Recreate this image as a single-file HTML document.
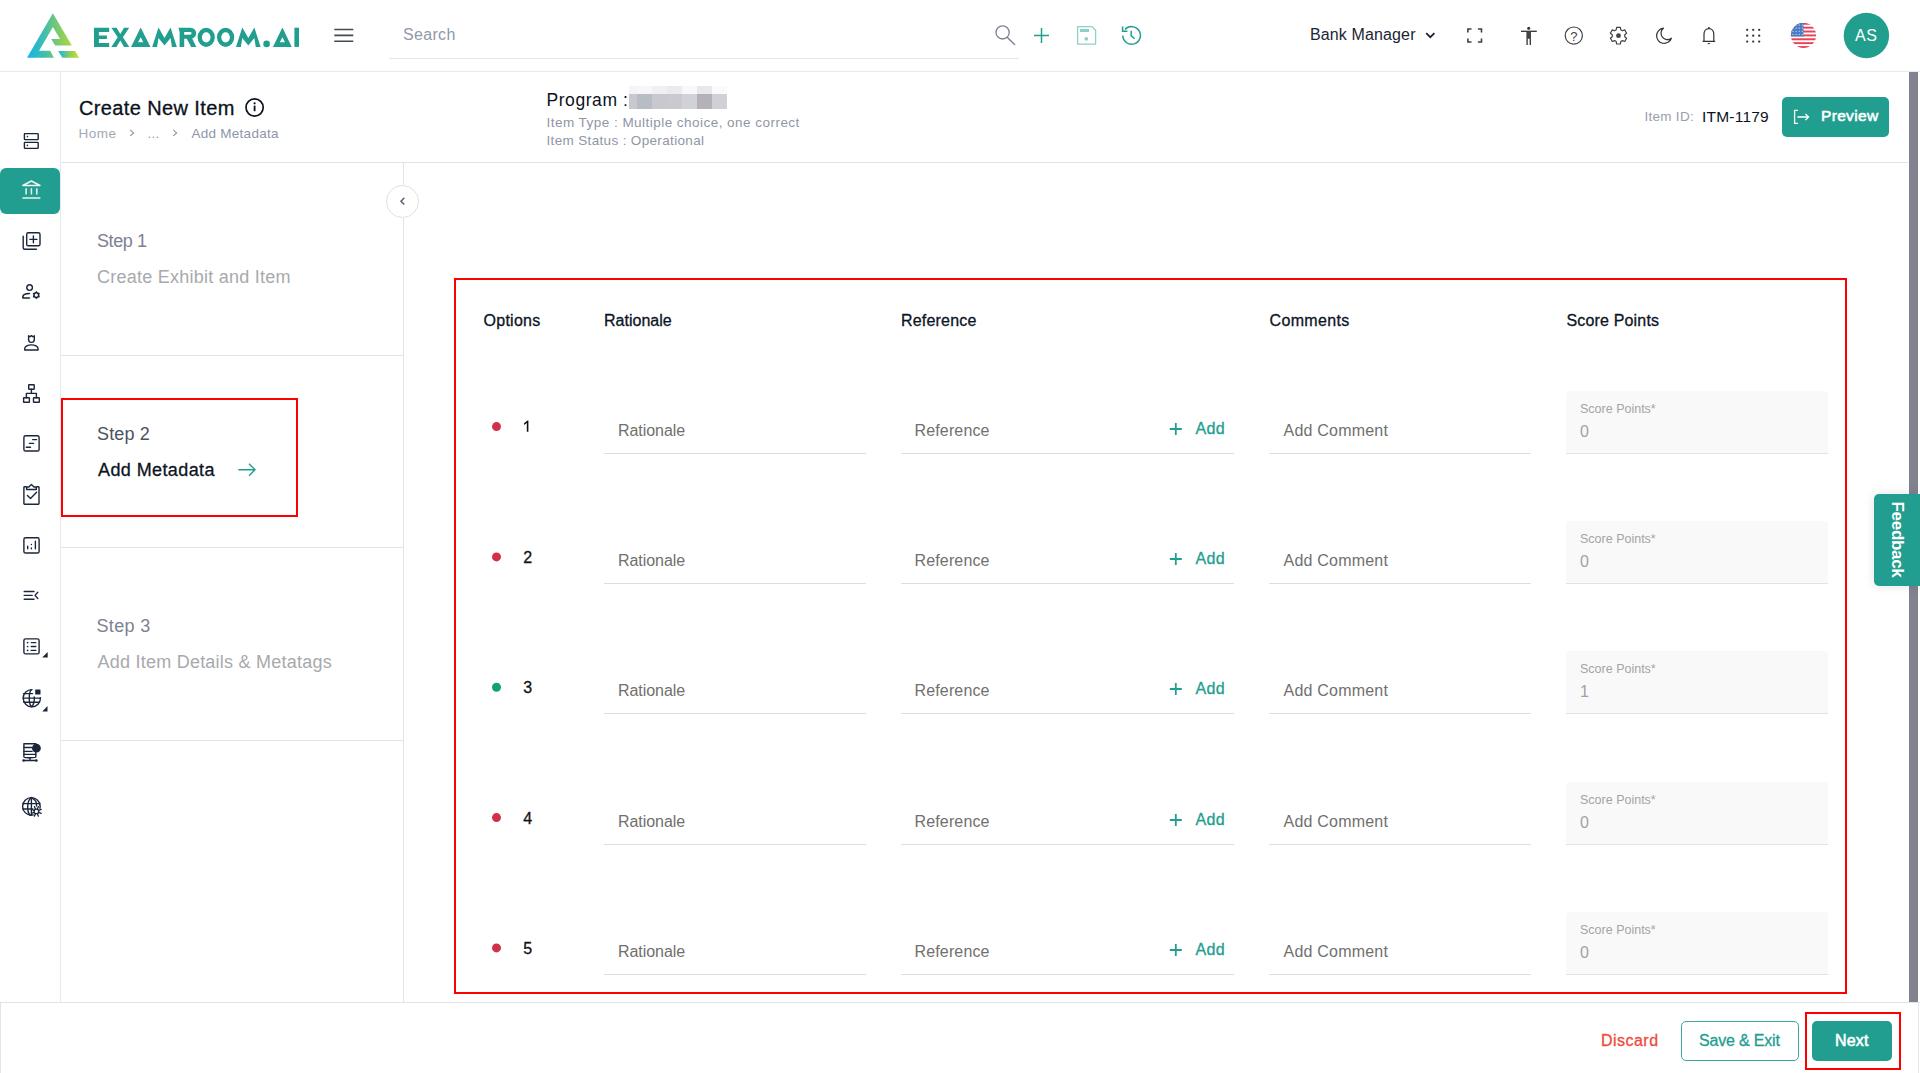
<!DOCTYPE html>
<html><head><meta charset="utf-8"><title>Create New Item</title><style>
*{box-sizing:border-box}
html,body{margin:0;padding:0}
body{width:1920px;height:1073px;overflow:hidden;background:#fff;font-family:"Liberation Sans",sans-serif;position:relative}
.t{position:absolute;white-space:nowrap}
.b{position:absolute}
svg.ov{position:absolute;left:0;top:0;width:1920px;height:1073px;overflow:visible}
</style></head><body>
<div class="b" style="left:0;top:71px;width:1920px;height:1px;background:#e8eaef"></div>
<div class="b" style="left:60px;top:72px;width:1px;height:930px;background:#e6e9f0"></div>
<div class="b" style="left:61px;top:162px;width:1847px;height:1px;background:#dfe3ea"></div>
<div class="b" style="left:403px;top:163px;width:1px;height:839px;background:#dfe3ea"></div>
<div class="b" style="left:61px;top:355px;width:342px;height:1px;background:#dfe3ea"></div>
<div class="b" style="left:61px;top:547px;width:342px;height:1px;background:#dfe3ea"></div>
<div class="b" style="left:61px;top:740px;width:342px;height:1px;background:#dfe3ea"></div>
<div class="b" style="left:0;top:1002px;width:1920px;height:1px;background:#dfe3ea"></div>
<div class="b" style="left:1918px;top:1002px;width:1px;height:71px;background:#e6e9f0"></div>
<div class="b" style="left:0;top:1002px;width:1px;height:71px;background:#dfe3ea"></div>
<div class="b" style="left:1909px;top:72px;width:9px;height:930px;background:#80828f"></div>
<div class="b" style="left:389px;top:58px;width:630px;height:1px;background:#e4e6ea"></div>
<div class="b" style="left:0;top:168px;width:60px;height:46px;background:#219e8f;border-radius:6px"></div>
<div class="b" style="left:1782px;top:97px;width:107px;height:40px;background:#219e8f;border-radius:5px"></div>
<div class="b" style="left:629px;top:86px;width:8px;height:8px;background:#f4f4f6"></div>
<div class="b" style="left:629px;top:94px;width:8px;height:15px;background:#c8c8ce"></div>
<div class="b" style="left:637px;top:86px;width:15px;height:8px;background:#f6f6f8"></div>
<div class="b" style="left:637px;top:94px;width:15px;height:15px;background:#b8bcc4"></div>
<div class="b" style="left:652px;top:86px;width:15px;height:8px;background:#f0f0f2"></div>
<div class="b" style="left:652px;top:94px;width:15px;height:15px;background:#c8c8ce"></div>
<div class="b" style="left:667px;top:86px;width:15px;height:8px;background:#ebebed"></div>
<div class="b" style="left:667px;top:94px;width:15px;height:15px;background:#cacace"></div>
<div class="b" style="left:682px;top:86px;width:15px;height:8px;background:#f8f8fa"></div>
<div class="b" style="left:682px;top:94px;width:15px;height:15px;background:#d0d2d8"></div>
<div class="b" style="left:697px;top:86px;width:15px;height:8px;background:#e8e8ea"></div>
<div class="b" style="left:697px;top:94px;width:15px;height:15px;background:#b4b2b8"></div>
<div class="b" style="left:712px;top:86px;width:15px;height:8px;background:#fafafa"></div>
<div class="b" style="left:712px;top:94px;width:15px;height:15px;background:#d0d0d6"></div>
<div class="b" style="left:386px;top:185px;width:33px;height:33px;border:1px solid #dde1e8;border-radius:50%;background:#fff"></div>
<div class="b" style="left:61px;top:398px;width:237px;height:119px;border:2px solid #ff0000"></div>
<div class="b" style="left:454px;top:278px;width:1393px;height:716px;border:2px solid #ff0000"></div>
<div class="b" style="left:1805px;top:1012px;width:96px;height:58px;border:2px solid #ff0000"></div>
<div class="b" style="left:1681px;top:1021px;width:118px;height:40px;border:1.5px solid #3aa99b;border-radius:5px"></div>
<div class="b" style="left:1812px;top:1021px;width:80px;height:40px;background:#219e8f;border-radius:5px"></div>
<div class="b" style="left:604px;top:453.00px;width:262px;height:1px;background:#dedede"></div>
<div class="b" style="left:901px;top:453.00px;width:333px;height:1px;background:#dedede"></div>
<div class="b" style="left:1269px;top:453.00px;width:262px;height:1px;background:#dedede"></div>
<div class="b" style="left:1566px;top:391.00px;width:262px;height:63px;background:#f9f9f9;border-radius:4px 4px 0 0;border-bottom:1px solid #e2e2e2"></div>
<div class="b" style="left:604px;top:583.00px;width:262px;height:1px;background:#dedede"></div>
<div class="b" style="left:901px;top:583.00px;width:333px;height:1px;background:#dedede"></div>
<div class="b" style="left:1269px;top:583.00px;width:262px;height:1px;background:#dedede"></div>
<div class="b" style="left:1566px;top:521.00px;width:262px;height:63px;background:#f9f9f9;border-radius:4px 4px 0 0;border-bottom:1px solid #e2e2e2"></div>
<div class="b" style="left:604px;top:713.00px;width:262px;height:1px;background:#dedede"></div>
<div class="b" style="left:901px;top:713.00px;width:333px;height:1px;background:#dedede"></div>
<div class="b" style="left:1269px;top:713.00px;width:262px;height:1px;background:#dedede"></div>
<div class="b" style="left:1566px;top:651.00px;width:262px;height:63px;background:#f9f9f9;border-radius:4px 4px 0 0;border-bottom:1px solid #e2e2e2"></div>
<div class="b" style="left:604px;top:844.00px;width:262px;height:1px;background:#dedede"></div>
<div class="b" style="left:901px;top:844.00px;width:333px;height:1px;background:#dedede"></div>
<div class="b" style="left:1269px;top:844.00px;width:262px;height:1px;background:#dedede"></div>
<div class="b" style="left:1566px;top:782.00px;width:262px;height:63px;background:#f9f9f9;border-radius:4px 4px 0 0;border-bottom:1px solid #e2e2e2"></div>
<div class="b" style="left:604px;top:974.00px;width:262px;height:1px;background:#dedede"></div>
<div class="b" style="left:901px;top:974.00px;width:333px;height:1px;background:#dedede"></div>
<div class="b" style="left:1269px;top:974.00px;width:262px;height:1px;background:#dedede"></div>
<div class="b" style="left:1566px;top:912.00px;width:262px;height:63px;background:#f9f9f9;border-radius:4px 4px 0 0;border-bottom:1px solid #e2e2e2"></div>
<div class="b" style="left:1874px;top:494px;width:46px;height:92px;background:#219e8f;border-radius:5px 0 0 5px;box-shadow:0 0 10px rgba(0,0,0,0.12)"></div>
<div class="t" id="feedback" style="font-size:17px;line-height:17px;font-weight:bold;color:#fff;transform-origin:center;transform:rotate(90deg);text-align:center;width:90px;left:1851.5px;top:530.8px;letter-spacing:-0.3px">Feedback</div>
<svg class="ov" width="1920" height="1073" viewBox="0 0 1920 1073">
<path d="M334.3 29.5 H353.3 M334.3 35.4 H353.3 M334.3 41.2 H353.3" stroke="#454a52" stroke-width="1.6" fill="none"/>
<circle cx="1002.6" cy="32.4" r="6.6" fill="none" stroke="#7e8290" stroke-width="1.3"/>
<path d="M1007.4 37.4 L1014.6 44.6" stroke="#7e8290" stroke-width="1.4" stroke-linecap="round"/>
<path d="M1041.5 28 V43 M1034 35.4 H1049" stroke="#219e8f" stroke-width="1.5"/>
<path d="M1077.6 26.6 H1092 L1095.6 30.2 V44.2 H1077.6 Z" fill="none" stroke="#8fd0c8" stroke-width="1.3" stroke-linejoin="round"/>
<rect x="1080" y="29" width="9" height="3" fill="#8fd0c8"/>
<circle cx="1086.3" cy="38.8" r="1.9" fill="#8fd0c8"/>
<path d="M1122.8 35.5 A8.8 8.8 0 1 0 1125 29.6" fill="none" stroke="#219e8f" stroke-width="1.5"/>
<path d="M1122.6 26.4 V31.2 H1127.4" fill="none" stroke="#219e8f" stroke-width="1.5"/>
<path d="M1131.2 30.8 V35.8 L1134.6 38.8" fill="none" stroke="#219e8f" stroke-width="1.5"/>
<path d="M1426.2 33.2 L1430.3 37.2 L1434.4 33.2" fill="none" stroke="#1c2434" stroke-width="1.8"/>
<path d="M1467.9 32.6 V29 H1471.5 M1477.9 29 H1481.5 V32.6 M1481.5 38.4 V42 H1477.9 M1471.5 42 H1467.9 V38.4" fill="none" stroke="#3b4150" stroke-width="1.6"/>
<circle cx="1528.7" cy="28.2" r="1.5" fill="#333"/>
<path d="M1521 31.3 H1536.8" stroke="#333" stroke-width="1.3"/>
<rect x="1526.4" y="31.3" width="4.6" height="7.5" fill="#444"/>
<path d="M1527.1 38.5 V45 M1530.3 38.5 V45" stroke="#333" stroke-width="1.3"/>
<circle cx="1573.8" cy="35.6" r="8.6" fill="none" stroke="#444" stroke-width="1.2"/>
<text x="1573.8" y="40.6" font-family="Liberation Sans" font-size="13" fill="#444" text-anchor="middle">?</text>
<path d="M1620.76 29.82 L1620.41 27.42 L1616.59 27.42 L1616.24 29.82 L1614.54 30.80 L1612.28 29.90 L1610.37 33.21 L1612.28 34.71 L1612.28 36.69 L1610.37 38.19 L1612.28 41.50 L1614.54 40.60 L1616.24 41.58 L1616.59 43.98 L1620.41 43.98 L1620.76 41.58 L1622.46 40.60 L1624.72 41.50 L1626.63 38.19 L1624.72 36.69 L1624.72 34.71 L1626.63 33.21 L1624.72 29.90 L1622.46 30.80 Z" fill="none" stroke="#444" stroke-width="1.2" stroke-linejoin="round"/>
<circle cx="1618.5" cy="35.7" r="2.4" fill="#444"/>
<path d="M1663.4 28.2 A7.6 7.6 0 1 0 1671.4 38.2 A6.2 6.2 0 0 1 1663.4 28.2 Z" fill="none" stroke="#333" stroke-width="1.2" stroke-linejoin="round"/>
<path d="M1702.6 41.4 H1715.2 M1704 41.4 V34.4 C1704 31 1706 28.6 1708.9 28.6 C1711.8 28.6 1713.8 31 1713.8 34.4 V41.4" fill="none" stroke="#333" stroke-width="1.2"/>
<circle cx="1708.9" cy="27.8" r="0.9" fill="#333"/>
<path d="M1707.4 43 H1710.4 L1708.9 44.6 Z" fill="#333"/>
<circle cx="1747.2" cy="29.8" r="1.15" fill="#333"/>
<circle cx="1747.2" cy="35.7" r="1.15" fill="#333"/>
<circle cx="1747.2" cy="41.6" r="1.15" fill="#333"/>
<circle cx="1753.2" cy="29.8" r="1.15" fill="#333"/>
<circle cx="1753.2" cy="35.7" r="1.15" fill="#333"/>
<circle cx="1753.2" cy="41.6" r="1.15" fill="#333"/>
<circle cx="1759.2" cy="29.8" r="1.15" fill="#333"/>
<circle cx="1759.2" cy="35.7" r="1.15" fill="#333"/>
<circle cx="1759.2" cy="41.6" r="1.15" fill="#333"/>
<defs><clipPath id="fc"><circle cx="1803.5" cy="35.4" r="12.6"/></clipPath></defs>
<g clip-path="url(#fc)"><rect x="1790" y="22" width="28" height="28" fill="#fff"/><rect x="1790" y="22.80" width="28" height="1.94" fill="#e8425a"/><rect x="1790" y="26.68" width="28" height="1.94" fill="#e8425a"/><rect x="1790" y="30.55" width="28" height="1.94" fill="#e8425a"/><rect x="1790" y="34.43" width="28" height="1.94" fill="#e8425a"/><rect x="1790" y="38.31" width="28" height="1.94" fill="#e8425a"/><rect x="1790" y="42.18" width="28" height="1.94" fill="#e8425a"/><rect x="1790" y="46.06" width="28" height="1.94" fill="#e8425a"/><rect x="1790" y="22.8" width="13.5" height="13.57" fill="#4a7cc4"/><circle cx="1793.0" cy="25.0" r="0.55" fill="#fff"/><circle cx="1793.0" cy="28.1" r="0.55" fill="#fff"/><circle cx="1793.0" cy="31.2" r="0.55" fill="#fff"/><circle cx="1793.0" cy="34.3" r="0.55" fill="#fff"/><circle cx="1796.1" cy="25.0" r="0.55" fill="#fff"/><circle cx="1796.1" cy="28.1" r="0.55" fill="#fff"/><circle cx="1796.1" cy="31.2" r="0.55" fill="#fff"/><circle cx="1796.1" cy="34.3" r="0.55" fill="#fff"/><circle cx="1799.2" cy="25.0" r="0.55" fill="#fff"/><circle cx="1799.2" cy="28.1" r="0.55" fill="#fff"/><circle cx="1799.2" cy="31.2" r="0.55" fill="#fff"/><circle cx="1799.2" cy="34.3" r="0.55" fill="#fff"/><circle cx="1802.3" cy="25.0" r="0.55" fill="#fff"/><circle cx="1802.3" cy="28.1" r="0.55" fill="#fff"/><circle cx="1802.3" cy="31.2" r="0.55" fill="#fff"/><circle cx="1802.3" cy="34.3" r="0.55" fill="#fff"/></g>
<circle cx="1866.4" cy="35.5" r="22.7" fill="#229e8f"/>
<rect x="24.4" y="133.6" width="13.8" height="6" rx="0.6" fill="none" stroke="#1b263b" stroke-width="1.4" stroke-linecap="round" stroke-linejoin="round"/>
<rect x="24.4" y="142.4" width="13.8" height="6" rx="0.6" fill="none" stroke="#1b263b" stroke-width="1.4" stroke-linecap="round" stroke-linejoin="round"/>
<circle cx="27.4" cy="136.6" r="0.8" fill="#1b263b"/><circle cx="27.4" cy="145.4" r="0.8" fill="#1b263b"/>
<path d="M22.8 185.5 L31.4 181 L40 185.5 Z" fill="none" stroke="#eef6f4" stroke-width="1.5" stroke-linejoin="round" stroke-linecap="butt"/>
<path d="M26.1 188.3 V194.6 M31.4 188.3 V194.6 M36.8 188.3 V194.6" fill="none" stroke="#eef6f4" stroke-width="1.5" stroke-linejoin="round" stroke-linecap="butt"/>
<path d="M22.4 198 H40.4" fill="none" stroke="#d5e8e4" stroke-width="1.7"/>
<rect x="26.7" y="232.8" width="13.3" height="13" rx="1.6" fill="none" stroke="#1b263b" stroke-width="1.4" stroke-linecap="round" stroke-linejoin="round"/>
<path d="M23.2 236.2 V247.5 Q23.2 249.3 25 249.3 H36.4" fill="none" stroke="#1b263b" stroke-width="1.4" stroke-linecap="round" stroke-linejoin="round"/>
<path d="M33.4 235.9 V242.8 M29.9 239.4 H36.9" fill="none" stroke="#1b263b" stroke-width="1.4" stroke-linecap="round" stroke-linejoin="round"/>
<circle cx="29.6" cy="287.6" r="2.8" fill="none" stroke="#1b263b" stroke-width="1.4" stroke-linecap="round" stroke-linejoin="round"/>
<path d="M29.4 293.5 C26 293.6 23.2 294.6 22.9 296.4 V298 H29.4" fill="none" stroke="#1b263b" stroke-width="1.6" stroke-linecap="round" stroke-linejoin="round"/>
<path fill="#1b263b" fill-rule="evenodd" d="M36.30 291.00 L34.80 292.50 L32.75 293.05 L33.30 295.10 L32.75 297.15 L34.80 297.70 L36.30 299.20 L37.80 297.70 L39.85 297.15 L39.30 295.10 L39.85 293.05 L37.80 292.50 Z M34.699999999999996 295.1 A1.6 1.6 0 1 0 37.9 295.1 A1.6 1.6 0 1 0 34.699999999999996 295.1 Z"/>
<path d="M28.6 335.8 L29.9 336.8 L31.4 335.6 L32.9 336.8 L34.3 335.8 V339.5 C34.3 341.2 33 342.4 31.4 342.4 C29.8 342.4 28.6 341.2 28.6 339.5 Z" fill="none" stroke="#1b263b" stroke-width="1.4" stroke-linecap="round" stroke-linejoin="round"/>
<path d="M24.7 350 V348.8 C24.7 346.4 28 344.9 31.4 344.9 C34.8 344.9 38.1 346.4 38.1 348.8 V350 Z" fill="none" stroke="#1b263b" stroke-width="1.4" stroke-linecap="round" stroke-linejoin="round"/>
<rect x="28.7" y="384.7" width="5.5" height="4.6" rx="0.4" fill="none" stroke="#1b263b" stroke-width="1.4" stroke-linecap="round" stroke-linejoin="round"/>
<rect x="23.6" y="397.8" width="5.8" height="4.5" rx="0.4" fill="none" stroke="#1b263b" stroke-width="1.4" stroke-linecap="round" stroke-linejoin="round"/>
<rect x="33.5" y="397.8" width="5.8" height="4.5" rx="0.4" fill="none" stroke="#1b263b" stroke-width="1.4" stroke-linecap="round" stroke-linejoin="round"/>
<path d="M31.4 389.3 V393.4 M26.4 397.8 V393.4 H36.4 V397.8" fill="none" stroke="#1b263b" stroke-width="1.4" stroke-linecap="round" stroke-linejoin="round"/>
<rect x="23.9" y="435.8" width="15.2" height="15.2" rx="1.6" fill="none" stroke="#1b263b" stroke-width="1.4" stroke-linecap="round" stroke-linejoin="round"/>
<path d="M32.6 439.6 H36.6 M29.4 443.4 H33.5 M26.3 447.3 H30.5" fill="none" stroke="#1b263b" stroke-width="1.4" stroke-linecap="round" stroke-linejoin="round"/>
<path d="M26 486.8 H24.6 Q23.9 486.8 23.9 487.5 V503.5 Q23.9 504.2 24.6 504.2 H38.3 Q39 504.2 39 503.5 V487.5 Q39 486.8 38.3 486.8 H37" fill="none" stroke="#1b263b" stroke-width="1.4" stroke-linecap="round" stroke-linejoin="round"/>
<path d="M26.6 489.5 V487 H28.8 L31.4 484.5 L34 487 H36.3 V489.5 Z" fill="none" stroke="#1b263b" stroke-width="1.4" stroke-linecap="round" stroke-linejoin="round"/>
<path d="M27.4 495.4 L30.5 498.4 L36.6 492.3" fill="none" stroke="#1b263b" stroke-width="1.4" stroke-linecap="round" stroke-linejoin="round"/>
<rect x="23.9" y="537.8" width="15.2" height="15.2" rx="1.6" fill="none" stroke="#1b263b" stroke-width="1.4" stroke-linecap="round" stroke-linejoin="round"/>
<path d="M27.7 546.1 V548.8 M31.4 547.9 V548.8 M35.4 541.2 V548.8" fill="none" stroke="#1b263b" stroke-width="1.4" stroke-linecap="round" stroke-linejoin="round"/>
<circle cx="31.4" cy="544.6" r="0.75" fill="#1b263b"/>
<path d="M24.2 591.5 H34 M24.2 595.4 H32.2 M24.2 599.3 H34 M37.8 592.3 L35 595.4 L37.8 598.5" fill="none" stroke="#1b263b" stroke-width="1.4" stroke-linecap="round" stroke-linejoin="round"/>
<rect x="23.9" y="638.9" width="15.2" height="15" rx="1.6" fill="none" stroke="#1b263b" stroke-width="1.4" stroke-linecap="round" stroke-linejoin="round"/>
<path d="M31.2 642.6 H35.8 M31.2 646.5 H35.8 M31.2 650.4 H35.8" fill="none" stroke="#1b263b" stroke-width="1.4" stroke-linecap="round" stroke-linejoin="round"/>
<circle cx="27.6" cy="642.6" r="0.85" fill="#1b263b"/>
<circle cx="27.6" cy="646.5" r="0.85" fill="#1b263b"/>
<circle cx="27.6" cy="650.4" r="0.85" fill="#1b263b"/>
<path d="M42.2 657.5 L47.7 652.1 V657.5 Z" fill="#1b263b"/>
<path d="M32 689.6 A8.6 8.6 0 1 0 40.4 697.6" fill="none" stroke="#1b263b" stroke-width="1.4" stroke-linecap="round" stroke-linejoin="round"/>
<path d="M23.5 693.6 H32.5 M23 698.1 H40.2 M23.8 702.2 H39.6 M31.5 689.7 C28.5 692 28.5 704 31.5 706.8 C34 704.5 34.5 700 34.2 697" fill="none" stroke="#1b263b" stroke-width="1.4" stroke-linecap="round" stroke-linejoin="round"/>
<rect x="35.2" y="689.5" width="5.3" height="5.1" rx="0.6" fill="#1b263b"/>
<path d="M42.3 711.5 L47.5 706.1 V711.5 Z" fill="#1b263b"/>
<path d="M23.9 743.8 H35.8 V757 C35.8 758 23.9 758 23.9 757 Z" fill="none" stroke="#1b263b" stroke-width="1.4" stroke-linecap="round" stroke-linejoin="round"/>
<path d="M23.9 747.5 H32 M23.9 751.4 H32 M23.9 754.4 H35.8" fill="none" stroke="#1b263b" stroke-width="1.4" stroke-linecap="round" stroke-linejoin="round"/>
<circle cx="36.4" cy="748.2" r="4.4" fill="#1b263b"/>
<path d="M23.6 760.5 H36.5 M30 758 V760.5" fill="none" stroke="#1b263b" stroke-width="1.4" stroke-linecap="round" stroke-linejoin="round"/>
<circle cx="23.6" cy="760.5" r="1.3" fill="#1b263b"/><circle cx="36.4" cy="760.5" r="1.3" fill="#1b263b"/>
<circle cx="31.4" cy="806.4" r="8.8" fill="none" stroke="#1b263b" stroke-width="1.4" stroke-linecap="round" stroke-linejoin="round"/>
<path d="M22.8 803.6 H40 M22.8 809 H34 M31.4 797.6 V815 M31.4 797.6 C27 800 26.5 811 30 815.2 M31.4 797.6 C35.5 799.5 36.8 803 36.6 806" fill="none" stroke="#1b263b" stroke-width="1.4" stroke-linecap="round" stroke-linejoin="round"/>
<circle cx="36.4" cy="811.4" r="4.2" fill="#fff"/>
<path d="M38.80 810.41 L41.20 809.41 M37.39 809.00 L38.39 806.60 M35.41 809.00 L34.41 806.60 M34.00 810.41 L31.60 809.41 M34.00 812.39 L31.60 813.39 M35.41 813.80 L34.41 816.20 M37.39 813.80 L38.39 816.20 M38.80 812.39 L41.20 813.39" stroke="#1b263b" stroke-width="1.3" stroke-linecap="round"/>
<circle cx="36.4" cy="811.4" r="2.3" fill="#fff" stroke="#1b263b" stroke-width="1.3"/>
<defs>
<linearGradient id="lg1" x1="27" y1="0" x2="80" y2="0" gradientUnits="userSpaceOnUse"><stop offset="0" stop-color="#10b3ee"/><stop offset="0.35" stop-color="#45bfa6"/><stop offset="0.6" stop-color="#80cb6a"/><stop offset="1" stop-color="#cde021"/></linearGradient>
<linearGradient id="lg2" x1="58" y1="0" x2="79" y2="0" gradientUnits="userSpaceOnUse"><stop offset="0" stop-color="#10b3ee"/><stop offset="0.5" stop-color="#7fcb6b"/><stop offset="1" stop-color="#cde021"/></linearGradient>
</defs>
<path d="M27 57.8 L52.9 13.3 L71.8 45.5 L55.2 45.5 L51.2 38.9 L60 38.9 L52.9 26.9 L39.1 50.8 L50.2 50.8 L53.9 57.8 Z" fill="url(#lg1)"/>
<path d="M58.2 51 L75.1 51 L79.1 57.8 L62.3 57.8 Z" fill="url(#lg2)"/>
<polygon fill="#229e8f" points="94.00,27.70 109.20,27.70 109.20,32.00 98.90,32.00 98.90,35.60 106.90,35.60 106.90,39.00 98.90,39.00 98.90,43.10 109.20,43.10 109.20,46.90 94.00,46.90"/>
<polygon fill="#229e8f" points="111.40,27.70 116.60,27.70 120.30,34.00 124.00,27.70 129.20,27.70 122.90,37.30 129.30,46.90 124.10,46.90 120.30,40.60 116.50,46.90 111.30,46.90 117.70,37.30"/>
<path fill="#229e8f" fill-rule="evenodd" d="M131 46.9 L140.7 27.4 L150.5 46.9 Z M138.1 42.3 L140.7 37.2 L143.29999999999998 42.3 Z"/>
<path fill="#229e8f" fill-rule="evenodd" d="M272.9 46.9 L282.4 27.4 L291.8 46.9 Z M279.79999999999995 42.3 L282.4 37.2 L285.0 42.3 Z"/>
<polygon fill="#229e8f" points="152.20,46.93 158.50,27.44 164.52,38.05 170.54,27.44 176.84,46.93 171.97,46.93 170.54,38.05 164.52,45.50 158.50,38.05 157.07,46.93"/>
<polygon fill="#229e8f" points="236.00,46.93 242.30,27.44 248.32,38.05 254.34,27.44 260.64,46.93 255.77,46.93 254.34,38.05 248.32,45.50 242.30,38.05 240.87,46.93"/>
<path fill="#229e8f" d="M178.5 27.7 H190 C194 27.7 196.2 30.5 196.2 33.3 C196.2 36 194.6 37.8 192.2 38.4 L196.3 46.9 H191.2 L186.8 38.8 H184.2 V46.9 H179.6 V32 L178.5 27.7 Z M184.2 31.9 V34.7 H189.8 C191 34.7 191.6 34.1 191.6 33.3 C191.6 32.5 191 31.9 189.8 31.9 Z"/>
<path fill="#229e8f" fill-rule="evenodd" d="M197.6 37.3 A8.6 9.6 0 1 0 214.79999999999998 37.3 A8.6 9.6 0 1 0 197.6 37.3 Z M201.89999999999998 37.3 A4.3 5.1 0 1 0 210.5 37.3 A4.3 5.1 0 1 0 201.89999999999998 37.3 Z"/>
<path fill="#229e8f" fill-rule="evenodd" d="M217.0 37.3 A8.6 9.6 0 1 0 234.2 37.3 A8.6 9.6 0 1 0 217.0 37.3 Z M221.29999999999998 37.3 A4.3 5.1 0 1 0 229.9 37.3 A4.3 5.1 0 1 0 221.29999999999998 37.3 Z"/>
<circle cx="266.6" cy="43.9" r="3.3" fill="#229e8f"/>
<rect x="294.4" y="27.7" width="4.6" height="19.2" fill="#229e8f"/>
<circle cx="254.6" cy="107.5" r="8.6" fill="none" stroke="#0b1120" stroke-width="1.7"/>
<rect x="253.7" y="105.6" width="1.8" height="5.6" fill="#0b1120"/><circle cx="254.6" cy="103.3" r="1.1" fill="#0b1120"/>
<path d="M130.2 129.9 L133.6 132.9 L130.2 135.9" fill="none" stroke="#8e96a8" stroke-width="1.2"/>
<path d="M173.2 129.9 L176.6 132.9 L173.2 135.9" fill="none" stroke="#8e96a8" stroke-width="1.2"/>
<path d="M1798 110.4 H1794.6 V123.4 H1798" fill="none" stroke="#fbf8ea" stroke-width="1.3"/>
<path d="M1797.4 117 H1808.6 M1805.4 113.9 L1808.6 117 L1805.4 120.1" fill="none" stroke="#fff" stroke-width="1.3"/>
<path d="M404.3 197.8 L401 201.2 L404.3 204.6" fill="none" stroke="#5a6070" stroke-width="1.5"/>
<path d="M238.3 469.8 H255 M249 463.8 L255 469.8 L249 475.8" fill="none" stroke="#219e8f" stroke-width="1.4"/>
<circle cx="496.5" cy="426.60" r="4.5" fill="#d1304a"/>
<path d="M1175.8 423.00 V435.00 M1169.8 429.00 H1181.8" stroke="#219e8f" stroke-width="1.8"/>
<circle cx="496.5" cy="556.93" r="4.5" fill="#d1304a"/>
<path d="M1175.8 553.00 V565.00 M1169.8 559.00 H1181.8" stroke="#219e8f" stroke-width="1.8"/>
<circle cx="496.5" cy="687.26" r="4.5" fill="#10a46d"/>
<path d="M1175.8 683.00 V695.00 M1169.8 689.00 H1181.8" stroke="#219e8f" stroke-width="1.8"/>
<circle cx="496.5" cy="817.59" r="4.5" fill="#d1304a"/>
<path d="M1175.8 814.00 V826.00 M1169.8 820.00 H1181.8" stroke="#219e8f" stroke-width="1.8"/>
<circle cx="496.5" cy="947.92" r="4.5" fill="#d1304a"/>
<path d="M1175.8 944.00 V956.00 M1169.8 950.00 H1181.8" stroke="#219e8f" stroke-width="1.8"/>
<path d="M528.4 431.8 V420.6 H527.4 L524 423.3 V425 L526.8 422.9 V431.8 Z" fill="#111"/>
</svg>
<div class="t" id="search" style="left:403.00px;top:27.28px;font-size:16px;line-height:16px;color:#8f98aa;letter-spacing:0.320px;">Search</div>
<div class="t" id="bank" style="left:1310.00px;top:26.78px;font-size:16px;line-height:16px;color:#1c2434;letter-spacing:0.127px;">Bank Manager</div>
<div class="t" id="as" style="left:1855.00px;top:28.28px;font-size:16px;line-height:16px;color:#ffffff;letter-spacing:0.500px;">AS</div>
<div class="t" id="title" style="left:79.00px;top:97.50px;font-size:20px;line-height:20px;color:#0b1120;letter-spacing:0.379px;-webkit-text-stroke:0.3px #0b1120;">Create New Item</div>
<div class="t" id="home" style="left:78.50px;top:126.83px;font-size:13.5px;line-height:13.5px;color:#a3a9b4;letter-spacing:0.467px;">Home</div>
<div class="t" id="dots" style="left:147.50px;top:126.74px;font-size:13px;line-height:13px;color:#8e96a8;letter-spacing:0.400px;">...</div>
<div class="t" id="bcmeta" style="left:191.50px;top:126.83px;font-size:13.5px;line-height:13.5px;color:#8e96a8;letter-spacing:0.264px;">Add Metadata</div>
<div class="t" id="program" style="left:546.50px;top:92.05px;font-size:17.5px;line-height:17.5px;color:#0b1120;letter-spacing:0.562px;">Program :</div>
<div class="t" id="itemtype" style="left:546.50px;top:115.83px;font-size:13.5px;line-height:13.5px;color:#8f96a6;letter-spacing:0.467px;">Item Type : Multiple choice, one correct</div>
<div class="t" id="itemstatus" style="left:546.50px;top:133.83px;font-size:13.5px;line-height:13.5px;color:#8f96a6;letter-spacing:0.342px;">Item Status : Operational</div>
<div class="t" id="itemid" style="left:1644.50px;top:110.33px;font-size:13.5px;line-height:13.5px;color:#9aa0ae;letter-spacing:0.271px;">Item ID:</div>
<div class="t" id="itm" style="left:1702.00px;top:108.69px;font-size:15.5px;line-height:15.5px;color:#0b1120;letter-spacing:0.214px;">ITM-1179</div>
<div class="t" id="preview" style="left:1821.00px;top:108.19px;font-size:15.5px;line-height:15.5px;color:#ffffff;letter-spacing:0.333px;-webkit-text-stroke:0.55px #ffffff;">Preview</div>
<div class="t" id="s1" style="left:97.00px;top:232.14px;font-size:18px;line-height:18px;color:#7c8291;letter-spacing:-0.420px;">Step 1</div>
<div class="t" id="s1d" style="left:97.00px;top:267.74px;font-size:18px;line-height:18px;color:#a8a9ad;letter-spacing:0.241px;">Create Exhibit and Item</div>
<div class="t" id="s2" style="left:97.00px;top:425.14px;font-size:18px;line-height:18px;color:#4d5260;letter-spacing:0.120px;">Step 2</div>
<div class="t" id="s2d" style="left:98.00px;top:460.64px;font-size:18px;line-height:18px;color:#0d1424;letter-spacing:0.400px;-webkit-text-stroke:0.3px #0d1424;">Add Metadata</div>
<div class="t" id="s3" style="left:96.50px;top:616.64px;font-size:18px;line-height:18px;color:#7c8291;letter-spacing:0.340px;">Step 3</div>
<div class="t" id="s3d" style="left:97.50px;top:653.14px;font-size:18px;line-height:18px;color:#a8a9ad;letter-spacing:0.235px;">Add Item Details &amp; Metatags</div>
<div class="t" id="h_options" style="left:483.50px;top:312.78px;font-size:16px;line-height:16px;color:#0d1424;letter-spacing:0.267px;-webkit-text-stroke:0.3px #0d1424;">Options</div>
<div class="t" id="h_rationale" style="left:604.00px;top:312.78px;font-size:16px;line-height:16px;color:#0d1424;letter-spacing:0.012px;-webkit-text-stroke:0.3px #0d1424;">Rationale</div>
<div class="t" id="h_reference" style="left:901.00px;top:312.78px;font-size:16px;line-height:16px;color:#0d1424;letter-spacing:0.188px;-webkit-text-stroke:0.3px #0d1424;">Reference</div>
<div class="t" id="h_comments" style="left:1269.50px;top:312.78px;font-size:16px;line-height:16px;color:#0d1424;letter-spacing:0.357px;-webkit-text-stroke:0.3px #0d1424;">Comments</div>
<div class="t" id="h_score" style="left:1566.50px;top:312.78px;font-size:16px;line-height:16px;color:#0d1424;letter-spacing:0.164px;-webkit-text-stroke:0.3px #0d1424;">Score Points</div>
<div class="t" id="discard" style="left:1601.00px;top:1032.78px;font-size:16px;line-height:16px;color:#ef4a3c;letter-spacing:0.467px;-webkit-text-stroke:0.3px #ef4a3c;">Discard</div>
<div class="t" id="saveexit" style="left:1699.00px;top:1032.78px;font-size:16px;line-height:16px;color:#219e8f;letter-spacing:-0.180px;-webkit-text-stroke:0.3px #219e8f;">Save &amp; Exit</div>
<div class="t" id="next" style="left:1835.00px;top:1032.78px;font-size:16px;line-height:16px;color:#ffffff;letter-spacing:0.200px;-webkit-text-stroke:0.55px #ffffff;">Next</div>
<div class="t" id="rat0" style="left:618.00px;top:423.28px;font-size:16px;line-height:16px;color:#707070;letter-spacing:-0.062px;">Rationale</div>
<div class="t" id="ref0" style="left:914.50px;top:422.78px;font-size:16px;line-height:16px;color:#707070;letter-spacing:0.150px;">Reference</div>
<div class="t" id="add0" style="left:1195.50px;top:420.78px;font-size:16px;line-height:16px;color:#219e8f;letter-spacing:0.350px;-webkit-text-stroke:0.3px #219e8f;">Add</div>
<div class="t" id="cmt0" style="left:1283.50px;top:422.78px;font-size:16px;line-height:16px;color:#707070;letter-spacing:0.210px;">Add Comment</div>
<div class="t" id="lbl0" style="left:1580.00px;top:403.15px;font-size:12.5px;line-height:12.5px;color:#a4a4a4;">Score Points*</div>
<div class="t" id="val0" style="left:1580.00px;top:423.78px;font-size:16px;line-height:16px;color:#a2a2a2;letter-spacing:0.700px;">0</div>
<div class="t" id="num1" style="left:523.20px;top:549.63px;font-size:16px;line-height:16px;color:#111111;letter-spacing:-1.950px;-webkit-text-stroke:0.3px #111111;">2</div>
<div class="t" id="rat1" style="left:618.00px;top:553.28px;font-size:16px;line-height:16px;color:#707070;letter-spacing:-0.062px;">Rationale</div>
<div class="t" id="ref1" style="left:914.50px;top:552.78px;font-size:16px;line-height:16px;color:#707070;letter-spacing:0.150px;">Reference</div>
<div class="t" id="add1" style="left:1195.50px;top:550.78px;font-size:16px;line-height:16px;color:#219e8f;letter-spacing:0.350px;-webkit-text-stroke:0.3px #219e8f;">Add</div>
<div class="t" id="cmt1" style="left:1283.50px;top:552.78px;font-size:16px;line-height:16px;color:#707070;letter-spacing:0.210px;">Add Comment</div>
<div class="t" id="lbl1" style="left:1580.00px;top:533.15px;font-size:12.5px;line-height:12.5px;color:#a4a4a4;">Score Points*</div>
<div class="t" id="val1" style="left:1580.00px;top:553.78px;font-size:16px;line-height:16px;color:#a2a2a2;letter-spacing:0.700px;">0</div>
<div class="t" id="num2" style="left:523.20px;top:679.63px;font-size:16px;line-height:16px;color:#111111;letter-spacing:-1.950px;-webkit-text-stroke:0.3px #111111;">3</div>
<div class="t" id="rat2" style="left:618.00px;top:683.28px;font-size:16px;line-height:16px;color:#707070;letter-spacing:-0.062px;">Rationale</div>
<div class="t" id="ref2" style="left:914.50px;top:682.78px;font-size:16px;line-height:16px;color:#707070;letter-spacing:0.150px;">Reference</div>
<div class="t" id="add2" style="left:1195.50px;top:680.78px;font-size:16px;line-height:16px;color:#219e8f;letter-spacing:0.350px;-webkit-text-stroke:0.3px #219e8f;">Add</div>
<div class="t" id="cmt2" style="left:1283.50px;top:682.78px;font-size:16px;line-height:16px;color:#707070;letter-spacing:0.210px;">Add Comment</div>
<div class="t" id="lbl2" style="left:1580.00px;top:663.15px;font-size:12.5px;line-height:12.5px;color:#a4a4a4;">Score Points*</div>
<div class="t" id="val2" style="left:1580.00px;top:683.78px;font-size:16px;line-height:16px;color:#a2a2a2;letter-spacing:0.700px;">1</div>
<div class="t" id="num3" style="left:523.20px;top:810.63px;font-size:16px;line-height:16px;color:#111111;letter-spacing:-1.950px;-webkit-text-stroke:0.3px #111111;">4</div>
<div class="t" id="rat3" style="left:618.00px;top:814.28px;font-size:16px;line-height:16px;color:#707070;letter-spacing:-0.062px;">Rationale</div>
<div class="t" id="ref3" style="left:914.50px;top:813.78px;font-size:16px;line-height:16px;color:#707070;letter-spacing:0.150px;">Reference</div>
<div class="t" id="add3" style="left:1195.50px;top:811.78px;font-size:16px;line-height:16px;color:#219e8f;letter-spacing:0.350px;-webkit-text-stroke:0.3px #219e8f;">Add</div>
<div class="t" id="cmt3" style="left:1283.50px;top:813.78px;font-size:16px;line-height:16px;color:#707070;letter-spacing:0.210px;">Add Comment</div>
<div class="t" id="lbl3" style="left:1580.00px;top:794.15px;font-size:12.5px;line-height:12.5px;color:#a4a4a4;">Score Points*</div>
<div class="t" id="val3" style="left:1580.00px;top:814.78px;font-size:16px;line-height:16px;color:#a2a2a2;letter-spacing:0.700px;">0</div>
<div class="t" id="num4" style="left:523.20px;top:940.63px;font-size:16px;line-height:16px;color:#111111;letter-spacing:-1.950px;-webkit-text-stroke:0.3px #111111;">5</div>
<div class="t" id="rat4" style="left:618.00px;top:944.28px;font-size:16px;line-height:16px;color:#707070;letter-spacing:-0.062px;">Rationale</div>
<div class="t" id="ref4" style="left:914.50px;top:943.78px;font-size:16px;line-height:16px;color:#707070;letter-spacing:0.150px;">Reference</div>
<div class="t" id="add4" style="left:1195.50px;top:941.78px;font-size:16px;line-height:16px;color:#219e8f;letter-spacing:0.350px;-webkit-text-stroke:0.3px #219e8f;">Add</div>
<div class="t" id="cmt4" style="left:1283.50px;top:943.78px;font-size:16px;line-height:16px;color:#707070;letter-spacing:0.210px;">Add Comment</div>
<div class="t" id="lbl4" style="left:1580.00px;top:924.15px;font-size:12.5px;line-height:12.5px;color:#a4a4a4;">Score Points*</div>
<div class="t" id="val4" style="left:1580.00px;top:944.78px;font-size:16px;line-height:16px;color:#a2a2a2;letter-spacing:0.700px;">0</div>
</body></html>
